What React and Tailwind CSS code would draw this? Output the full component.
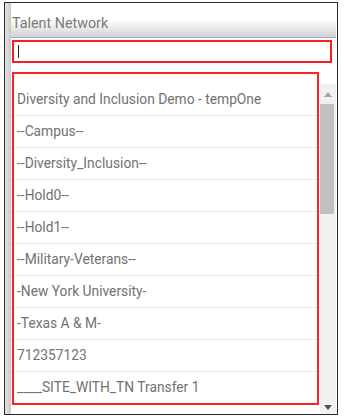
const items = [
  "Diversity and Inclusion Demo - tempOne",
  "--Campus--",
  "--Diversity_Inclusion--",
  "--Hold0--",
  "--Hold1--",
  "--Military-Veterans--",
  "-New York University-",
  "-Texas A & M-",
  "712357123",
  "____SITE_WITH_TN Transfer 1",
  "",
];

function App() {
  return (
    <div className="w-[344px] h-[420px] bg-white overflow-hidden pt-[2px] pl-[4px] font-['Roboto',sans-serif]">
      <div className="w-[334px] h-[413px] border border-[#2a2a2a] flex">
        {/* left shadow strip */}
        <div className="w-[6px] bg-linear-to-r from-[#e4e4e4] via-[#d6d6d6] to-[#c8c8c8]" />

        <div className="flex-1 flex flex-col min-w-0">
          {/* header */}
          <div className="h-[35px] shrink-0 border-b border-[#a6a3d0] bg-linear-to-b from-white via-white to-[#d2d2d2] pl-[1px] pt-[8px]">
            <span className="text-[14.3px] leading-[20px] text-[#7a7a7a]">
              Talent Network
            </span>
          </div>

          {/* search input */}
          <div className="mt-[2px] ml-[1px] w-[320px] h-[23px] border-2 border-[#ff1c1c] flex items-center pl-[4px]">
            <div className="w-[1px] h-[13px] bg-[#222]" />
          </div>

          {/* list */}
          <div className="relative flex-1 flex mt-[9px] min-h-0">
            <div className="flex-1 flex flex-col overflow-hidden mt-[12px] min-w-0">
              {items.map((item, idx) => (
                <div
                  key={idx}
                  className="h-[32px] shrink-0 border-b border-[#ececec] flex items-center pl-[6px] text-[13.8px] text-[#727272] whitespace-nowrap"
                >
                  {item}
                </div>
              ))}
            </div>

            {/* scrollbar */}
            <div className="w-[16px] mt-[12px] bg-[#f1f1f1] flex flex-col items-center">
              <div className="h-[20px] flex items-center justify-center">
                <svg width="8" height="5" viewBox="0 0 8 5">
                  <path d="M0 5 L4 0 L8 5 Z" fill="#a3a3a3" />
                </svg>
              </div>
              <div className="w-[14px] h-[110px] bg-[#c1c1c1] mr-[2px]" />
              <div className="flex-1" />
              <div className="h-[14px] flex items-center justify-center">
                <svg width="8" height="5" viewBox="0 0 8 5">
                  <path d="M0 0 L8 0 L4 5 Z" fill="#505050" />
                </svg>
              </div>
            </div>

            {/* annotation outline */}
            <div className="absolute left-[1px] top-0 w-[307px] h-[333px] border-2 border-[#ff2222] pointer-events-none" />
          </div>
        </div>
        <div className="w-[1px]" />
      </div>
    </div>
  );
}

export default App;
